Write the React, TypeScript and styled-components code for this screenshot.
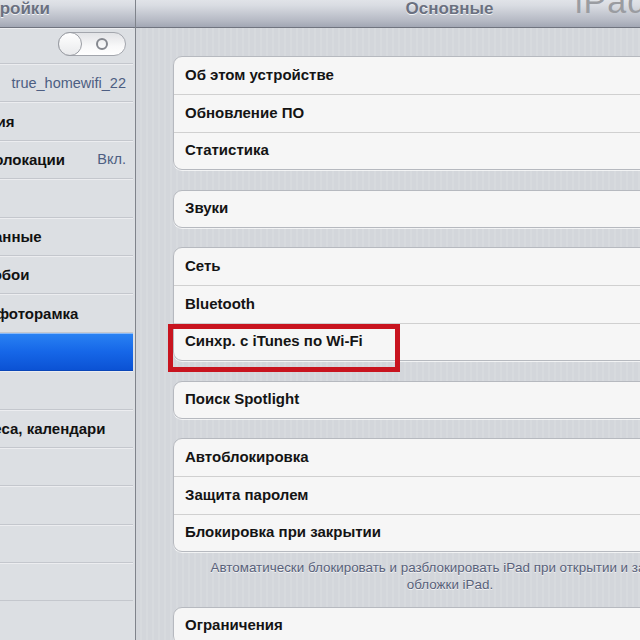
import { FC } from 'react'
import styled, { createGlobalStyle } from 'styled-components'

const GlobalStyle = createGlobalStyle`
    html, body {
        margin: 0;
        padding: 0;
        width: 640px;
        height: 640px;
        overflow: hidden;
        background: #d4d7dc;
    }
    body {
        font-family: "Liberation Sans", Arial, "Noto Sans", sans-serif;
        -webkit-font-smoothing: antialiased;
    }
`

type SideItem = {
    label?: string
    detail?: string
    toggle?: boolean
    selected?: boolean
}

const sideItems: SideItem[] = [
    { label: 'Авиарежим', toggle: true },
    { label: 'Wi-Fi', detail: 'true_homewifi_22' },
    { label: 'Уведомления' },
    { label: 'Службы геолокации', detail: 'Вкл.' },
    { label: 'Сотовые' },
    { label: 'Сотовые данные' },
    { label: 'Яркость и обои' },
    { label: 'Цифровая фоторамка' },
    { label: 'Основные', selected: true },
    { label: 'iCloud' },
    { label: 'Почта, адреса, календари' },
    { label: 'Twitter' },
    { label: 'FaceTime' },
    { label: 'Safari' },
    { label: 'Музыка' },
]

const groups: string[][] = [
    ['Об этом устройстве', 'Обновление ПО', 'Статистика'],
    ['Звуки'],
    ['Сеть', 'Bluetooth', 'Синхр. с iTunes по Wi-Fi'],
    ['Поиск Spotlight'],
    ['Автоблокировка', 'Защита паролем', 'Блокировка при закрытии'],
]

const HIGHLIGHTED = 'Синхр. с iTunes по Wi-Fi'

const Switch:FC = ()=>{
    return (
        <SwitchTrack>
            <SwitchKnob />
            <SwitchO />
        </SwitchTrack>
    )
}

const App:FC = ()=>{
    return (
        <>
            <GlobalStyle />
            <Screen>
                <Sidebar>
                    <TopBar>
                        <BarTitle>Настройки</BarTitle>
                    </TopBar>
                    {
                        sideItems.map((item,i)=>(
                            <SideRow key={i} $first={i===0} $selected={item.selected}>
                                <SideLabel>{item.label}</SideLabel>
                                {item.detail&&<SideDetail>{item.detail}</SideDetail>}
                                {item.toggle&&<Switch />}
                            </SideRow>
                        ))
                    }
                </Sidebar>
                <Main>
                    <TopBar>
                        <BarTitle>Основные</BarTitle>
                        <Watermark>iPad</Watermark>
                    </TopBar>
                    <Content>
                        {
                            groups.map((rows,g)=>(
                                <Card key={g}>
                                    {
                                        rows.map(r=>(
                                            <Row key={r}>
                                                {r}
                                                {r===HIGHLIGHTED&&<Highlight />}
                                            </Row>
                                        ))
                                    }
                                </Card>
                            ))
                        }
                        <Footnote>
                            Автоматически блокировать и разблокировать iPad при открытии и закрытии обложки iPad.
                        </Footnote>
                        <Card>
                            <Row>Ограничения</Row>
                        </Card>
                    </Content>
                </Main>
            </Screen>
        </>
    )
}

const Screen = styled.div`
    display: flex;
    width: 640px;
    height: 640px;
    overflow: hidden;
`
Screen.displayName = "Screen"

const Sidebar = styled.div`
    flex: none;
    width: 260px;
    margin-left: -125px;
    background: #dcdfe3;
    border-right: 1px solid #7f838b;
    display: flex;
    flex-direction: column;
`
Sidebar.displayName = "Sidebar"

const TopBar = styled.div`
    position: relative;
    flex: none;
    height: 39px;
    margin-top: -12px;
    background: linear-gradient(to bottom, #f1f2f5 0%, #d9dce2 45%, #b4b8c3 85%, #a2a7b4 100%);
    border-bottom: 1px solid #70747f;
    display: flex;
    align-items: center;
    justify-content: center;
`
TopBar.displayName = "TopBar"

const BarTitle = styled.div`
    font-size: 17px;
    font-weight: bold;
    color: #6a7080;
    text-shadow: 0 1px 0 rgba(255,255,255,0.85);
    padding-top: 2px;
`
BarTitle.displayName = "BarTitle"

const Watermark = styled.div`
    position: absolute;
    left: 439px;
    top: -6px;
    font-size: 34px;
    color: #9a9ca1;
    letter-spacing: 1px;
`
Watermark.displayName = "Watermark"

const SideRow = styled.div<{ $first?: boolean; $selected?: boolean }>`
    flex: none;
    height: ${p=>p.$first?'36px':'38.4px'};
    box-sizing: border-box;
    display: flex;
    align-items: center;
    padding: 0 7px 0 39px;
    border-bottom: 1px solid #c4c7cd;
    box-shadow: inset 0 1px 0 rgba(255,255,255,0.45);
    margin-right: 2px;
    ${p=>p.$selected&&`
        background: linear-gradient(to bottom, #2a83f3 0%, #1667e8 50%, #0b52d4 100%);
        border-bottom-color: #0a46b8;
        color: #fff;
    `}
`
SideRow.displayName = "SideRow"

const SideLabel = styled.div`
    flex: 1;
    font-size: 15px;
    font-weight: bold;
    color: #111;
    white-space: nowrap;
`
SideLabel.displayName = "SideLabel"

const SideDetail = styled.div`
    font-size: 14.5px;
    color: #4d5e82;
    white-space: nowrap;
`
SideDetail.displayName = "SideDetail"

const SwitchTrack = styled.div`
    position: relative;
    width: 68px;
    height: 24px;
    box-sizing: border-box;
    border-radius: 12px;
    border: 1px solid #a3a6ad;
    background: linear-gradient(to bottom, #e2e3e6 0%, #f8f8f9 60%, #ffffff 100%);
    margin-top: -4px;
`
SwitchTrack.displayName = "SwitchTrack"

const SwitchKnob = styled.div`
    position: absolute;
    left: -1px;
    top: -1px;
    width: 24px;
    height: 24px;
    box-sizing: border-box;
    border-radius: 50%;
    border: 1px solid #9a9da4;
    background: linear-gradient(to bottom, #ffffff 0%, #e9eaec 100%);
`
SwitchKnob.displayName = "SwitchKnob"

const SwitchO = styled.div`
    position: absolute;
    left: 37px;
    top: 5px;
    width: 12px;
    height: 12px;
    box-sizing: border-box;
    border-radius: 50%;
    border: 2px solid #85888f;
`
SwitchO.displayName = "SwitchO"

const Main = styled.div`
    flex: none;
    width: 627px;
    display: flex;
    flex-direction: column;
    background: repeating-linear-gradient(90deg, #d3d6db 0px, #d3d6db 4px, #d7dade 4px, #d7dade 6px);
`
Main.displayName = "Main"

const Content = styled.div`
    padding: 28px 36px 0 37px;
    display: flex;
    flex-direction: column;
`
Content.displayName = "Content"

const Card = styled.div`
    background: #f6f6f6;
    border-radius: 9px;
    border: 1px solid #b6b9bf;
    box-shadow: 0 1px 0 rgba(255,255,255,0.7);
    margin-bottom: 19.5px;
`
Card.displayName = "Card"

const Row = styled.div`
    position: relative;
    height: 38px;
    box-sizing: border-box;
    display: flex;
    align-items: center;
    padding: 0 0 3px 11px;
    font-size: 15px;
    font-weight: bold;
    color: #141414;
    border-bottom: 1px solid #d0d0d0;
    &:last-child{
        border-bottom: none;
        height: 36px;
    }
`
Row.displayName = "Row"

const Highlight = styled.div`
    position: absolute;
    left: -6px;
    top: 0px;
    width: 232px;
    height: 48px;
    box-sizing: border-box;
    border: 5px solid #c8141f;
`
Highlight.displayName = "Highlight"

const Footnote = styled.div`
    margin: -13px auto 14px;
    max-width: 500px;
    text-align: center;
    font-size: 13.4px;
    line-height: 17px;
    color: #58617a;
    text-shadow: 0 1px 0 rgba(255,255,255,0.7);
`
Footnote.displayName = "Footnote"

export default App
